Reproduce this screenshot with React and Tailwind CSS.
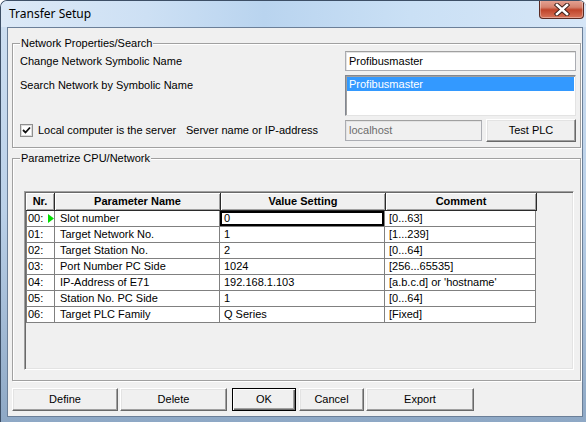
import React from "react";

const rows = [
  ["00:", "Slot number", "0", "[0...63]"],
  ["01:", "Target Network No.", "1", "[1...239]"],
  ["02:", "Target Station No.", "2", "[0...64]"],
  ["03:", "Port Number PC Side", "1024", "[256...65535]"],
  ["04:", "IP-Address of E71", "192.168.1.103", "[a.b.c.d] or 'hostname'"],
  ["05:", "Station No. PC Side", "1", "[0...64]"],
  ["06:", "Target PLC Family", "Q Series", "[Fixed]"],
];

function Btn({ w, children, def }) {
  return (
    <div
      className={`${w} h-[23px] flex items-center justify-center bg-[#f0f0f0] text-black ${
        def
          ? "border border-[#000] shadow-[inset_1px_1px_0_#fff,inset_-1px_-1px_0_#696969,inset_-2px_-2px_0_#a0a0a0]"
          : "border border-t-[#fff] border-l-[#fff] border-r-[#696969] border-b-[#696969] shadow-[inset_-1px_-1px_0_#a0a0a0,inset_1px_1px_0_#e3e3e3]"
      }`}
    >
      {children}
    </div>
  );
}

function Group({ title, h, mt, children }) {
  return (
    <div
      className={`relative ${h} ${mt} ml-[4px] w-[569px] border border-[#a0a0a0] shadow-[1px_1px_0_#fff,inset_1px_1px_0_#fff]`}
    >
      <div className="absolute left-[7px] -top-[7px] px-[1px] bg-[#f0f0f0] leading-[13px]">
        {title}
      </div>
      {children}
    </div>
  );
}

export default function App() {
  return (
    <div
      className="w-[586px] h-[422px] flex flex-col overflow-hidden border-l border-t border-[#3d4f66] rounded-tl-[7px] rounded-tr-[7px] bg-[linear-gradient(180deg,#cfe0f2_0%,#bad0e8_50%,#8ea8c5_100%)] text-[11px] text-black"
      style={{ fontFamily: '"Liberation Sans", Arial, sans-serif' }}
    >
      {/* Title bar */}
      <div className="h-[26px] flex items-start justify-between bg-[linear-gradient(90deg,#dce9f7_0%,#cde0f4_25%,#b9d4ef_45%,#cae0f5_70%,#d6e6f7_100%)]">
        <div
          className="pl-[8px] pt-[5px] text-[12px] leading-[16px] text-black"
          style={{ fontFamily: '"Noto Sans", "Open Sans", sans-serif' }}
        >
          Transfer Setup
        </div>
        <div className="-mt-px mr-[2px] w-[45px] h-[19px] rounded-b-[4px] border border-t-0 border-[#5a2a23] flex items-center justify-center bg-[linear-gradient(180deg,#e6a596_0%,#d5826e_40%,#c0442a_55%,#d8745a_100%)] shadow-[inset_0_0_0_1px_rgba(255,255,255,0.35)]">
          <svg width="16" height="13" viewBox="0 0 16 13">
            <path d="M3 2 L13 11 M13 2 L3 11" stroke="#3a1d18" strokeWidth="4.4" strokeLinecap="square" />
            <path d="M3 2 L13 11 M13 2 L3 11" stroke="#fff" strokeWidth="2.6" strokeLinecap="square" />
          </svg>
        </div>
      </div>

      {/* Client area */}
      <div className="ml-[6px] mr-[3px] mb-[5px] flex-1 border border-[#6b7f98] bg-[#f0f0f0] flex flex-col">
        <Group title="Network Properties/Search" h="h-[105px]" mt="mt-[15px]">
          <div className="flex flex-col pl-[7px] pr-[4px] pt-[7px]">
            <div className="flex items-center h-[20px]">
              <div className="flex-1 leading-[13px]">Change Network Symbolic Name</div>
              <div className="w-[231px] h-[20px] bg-white border border-[#abadb3] border-t-[#a0a0a0] shadow-[inset_1px_1px_0_#e3e3e3] flex items-center pl-[3px]">
                Profibusmaster
              </div>
            </div>
            <div className="flex items-start mt-[4px] h-[41px]">
              <div className="flex-1 mt-[4px] leading-[13px]">Search Network by Symbolic Name</div>
              <div className="w-[231px] h-[41px] bg-white border border-t-[#828790] border-l-[#828790] border-r-[#e3e3e3] border-b-[#e3e3e3] shadow-[inset_1px_1px_0_#a0a0a0]">
                <div className="ml-px mt-px mr-[1px] h-[14px] bg-[#3399ff] text-white pl-[2px] leading-[14px]">
                  Profibusmaster
                </div>
              </div>
            </div>
            <div className="flex items-center mt-[4px] h-[21px]">
              <div className="w-[166px] flex items-center">
                <div className="w-[13px] h-[13px] bg-white border border-[#8f8f8f] shadow-[inset_0_0_0_1px_#dcdcdc] flex items-center justify-center">
                  <svg width="9" height="9" viewBox="0 0 9 9">
                    <path d="M1 4 L3.5 6.5 L8 1.5" stroke="#111" strokeWidth="1.8" fill="none" />
                  </svg>
                </div>
                <div className="ml-[5px] leading-[13px]">Local computer is the server</div>
              </div>
              <div className="flex-1 leading-[13px]">Server name or IP-address</div>
              <div className="w-[137px] h-[21px] bg-[#f0f0f0] border border-[#abadb3] border-t-[#a0a0a0] shadow-[inset_1px_1px_0_#e3e3e3] flex items-center pl-[3px] text-[#6d6d6d]">
                localhost
              </div>
              <div className="ml-[4px]">
                <Btn w="w-[90px]">Test PLC</Btn>
              </div>
            </div>
          </div>
        </Group>

        <Group title="Parametrize CPU/Network" h="h-[223px]" mt="mt-[10px]">
          <div className="pl-[11px] pt-[32px]">
            <div className="w-[550px] h-[179px] border border-t-[#a0a0a0] border-l-[#a0a0a0] border-r-white border-b-white shadow-[inset_1px_1px_0_#696969,inset_-1px_-1px_0_#e3e3e3] pl-px pt-px">
              <div className="flex h-[18px] font-bold">
                {[
                  ["w-[29px]", "Nr."],
                  ["w-[166px]", "Parameter Name"],
                  ["w-[165px]", "Value Setting"],
                  ["w-[151px]", "Comment"],
                ].map(([w, t]) => (
                  <div
                    key={t}
                    className={`${w} h-[18px] flex items-center justify-center bg-[#f0f0f0] border-r border-b border-[#2b2b2b] shadow-[inset_1px_1px_0_#fff,inset_-1px_-1px_0_#a0a0a0] leading-[13px]`}
                  >
                    {t}
                  </div>
                ))}
              </div>
              {rows.map((r, i) => (
                <div key={i} className="flex h-[16px]">
                  <div className="w-[29px] h-[16px] bg-white border-l border-r border-b border-[#808080] flex items-center pl-[1px] leading-[13px] relative">
                    {r[0]}
                    {i === 0 && (
                      <svg className="absolute left-[21px] top-[3px]" width="6" height="9" viewBox="0 0 6 9">
                        <path d="M0 0 L6 4.5 L0 9 Z" fill="#00dd00" />
                      </svg>
                    )}
                  </div>
                  <div className="w-[165px] h-[16px] bg-white border-r border-b border-[#808080] flex items-center pl-[5px] leading-[13px]">
                    {r[1]}
                  </div>
                  <div
                    className={`w-[165px] h-[16px] bg-white border-r border-b border-[#808080] flex items-center pl-[4px] leading-[13px] ${
                      i === 0 ? "shadow-[inset_0_0_0_2px_#000]" : ""
                    }`}
                  >
                    {r[2]}
                  </div>
                  <div className="w-[151px] h-[16px] bg-white border-r border-b border-[#808080] flex items-center pl-[4px] leading-[13px]">
                    {r[3]}
                  </div>
                </div>
              ))}
            </div>
          </div>
        </Group>

        <div className="flex mt-[7px] ml-[4px]">
          <Btn w="w-[106px]">Define</Btn>
          <div className="ml-[2px]">
            <Btn w="w-[107px]">Delete</Btn>
          </div>
          <div className="ml-[5px]">
            <Btn w="w-[64px]" def>
              OK
            </Btn>
          </div>
          <div className="ml-[3px]">
            <Btn w="w-[65px]">Cancel</Btn>
          </div>
          <div className="ml-[2px]">
            <Btn w="w-[108px]">Export</Btn>
          </div>
        </div>
      </div>
    </div>
  );
}
